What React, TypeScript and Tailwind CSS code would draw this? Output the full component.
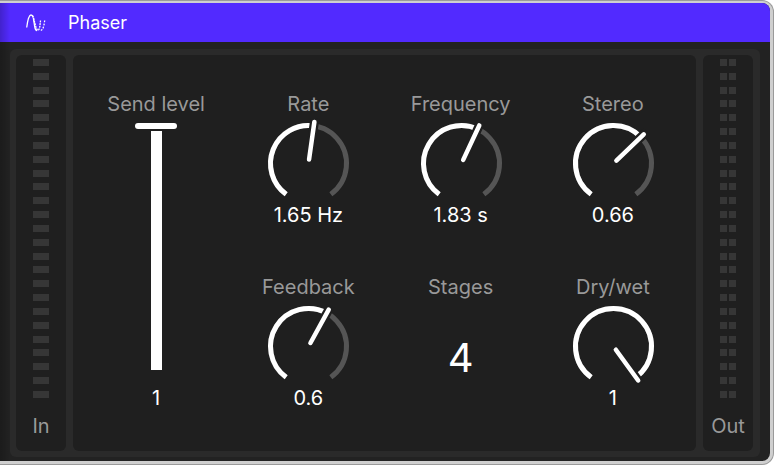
const FONT = "font-['Inter','Liberation_Sans',sans-serif]";
const SWEEP = 144;
const RADIUS = 38;

function point(angle: number, radius: number) {
  const a = (angle * Math.PI) / 180;
  return [50 + radius * Math.sin(a), 50 - radius * Math.cos(a)];
}

function arc(from: number, to: number) {
  const [x1, y1] = point(from, RADIUS);
  const [x2, y2] = point(to, RADIUS);
  return `M${x1} ${y1}A${RADIUS} ${RADIUS} 0 ${to - from > 180 ? 1 : 0} 1 ${x2} ${y2}`;
}

function Dial({ position }: { position: number }) {
  const angle = (position * 2 - 1) * SWEEP;
  const [x1, y1] = point(angle, 4);
  const [x2, y2] = point(angle, 42);
  const [hx, hy] = point(angle, 46);
  return (
    <svg viewBox="3.5 4.5 92 92" className="size-[92px]" fill="none" aria-hidden="true">
      <path d={arc(-SWEEP, SWEEP)} stroke="#555555" strokeWidth="5" />
      <path d={arc(-SWEEP, angle)} stroke="#ffffff" strokeWidth="5" />
      <path d={`M${x1} ${y1}L${hx} ${hy}`} stroke="#1f1f1f" strokeWidth="9" />
      <path d={`M${x1} ${y1}L${x2} ${y2}`} stroke="#ffffff" strokeWidth="4.5" strokeLinecap="round" />
    </svg>
  );
}

type KnobProps = { id: string; label: string; value: string; position: number };

function Knob({ id, label, value, position }: KnobProps) {
  return (
    <div className="flex flex-col items-center">
      <label htmlFor={id} className="text-xl leading-6 text-[#999999]">{label}</label>
      <div className="relative mt-0.5 -mb-[7px]">
        <Dial position={position} />
        <input
          id={id}
          type="range"
          min={0}
          max={1}
          step={0.001}
          defaultValue={position}
          aria-valuetext={value}
          className="absolute inset-0 size-full cursor-pointer opacity-0"
        />
      </div>
      <output htmlFor={id} className="text-xl leading-6 text-white">{value}</output>
    </div>
  );
}

function Meter({ label, channels }: { label: string; channels: number }) {
  return (
    <section aria-label={label} className="flex w-[50px] shrink-0 flex-col items-center rounded-md bg-[#1f1f1f] pt-1">
      <div className="flex h-[339px] gap-0.5">
        {Array.from({ length: channels }, (_, c) => (
          <div key={c} className="flex flex-col justify-between">
            {Array.from({ length: 25 }, (_, i) => (
              <div key={i} className={`h-[7px] bg-[#363636] ${channels === 1 ? "w-4" : "w-[7px]"}`} />
            ))}
          </div>
        ))}
      </div>
      <span className="mt-4 text-xl leading-6 text-[#999999]">{label}</span>
    </section>
  );
}

export default function App() {
  return (
    <main className={`rounded-r-xl border-y border-r border-[#9a9a9a] bg-[#cfcfcf] pt-0.5 pr-[3px] pb-[3px] ${FONT}`}>
      <div className="relative overflow-hidden rounded-r-lg bg-[#222222] pb-1">
        <header className="flex h-[39px] items-center gap-[22px] bg-[#522aff] pl-[26px] text-white">
          <svg viewBox="0 0 20 18" className="h-[18px] w-5" fill="none" stroke="currentColor" strokeWidth="1.3" aria-hidden="true">
            <path d="M.7 13.500C1.500 7.500 2.500 1 5 1c1.200 0 1.800 1 2.200 2.500" />
            <path d="M7.300 4c.6 3 .9 6 1.500 9 .4 2.200 1 3.500 2.200 3.500" />
            <path d="M6.500 1.500c2 3 2.500 12 5 14.500 2 1 2.500-4 3-9.500" strokeDasharray="2 .7" />
            <path d="M18.700 6.500c-.6 4-1.300 9.500-4 10" strokeDasharray="1.800 1.300" />
          </svg>
          <h1 className="text-lg leading-6">Phaser</h1>
        </header>
        <div className="mt-[7px] mr-2.5 ml-2.5 flex gap-[7px] rounded-md bg-[#2a2a2a] py-1.5 pr-[7px] pl-1.5">
          <Meter label="In" channels={1} />
          <div className="grid max-h-[396px] grow auto-rows-[183px] grid-cols-4 rounded-md bg-[#1f1f1f] px-[7px] pt-[37px]">
            <div className="row-span-2 flex flex-col items-center">
              <label htmlFor="send" className="text-xl leading-6 text-[#999999]">Send level</label>
              <div className="relative mt-[7px] flex flex-col items-center gap-0.5">
                <div className="h-1.5 w-[42px] rounded-full bg-white" />
                <div className="h-[239px] w-[11px] bg-white" />
                <input id="send" type="range" min={0} max={1} step={0.01} defaultValue={1} className="absolute inset-0 size-full cursor-pointer opacity-0 [direction:rtl] [writing-mode:vertical-lr]" />
              </div>
              <output htmlFor="send" className="mt-4 text-xl leading-6 text-white">1</output>
            </div>
            <Knob id="rate" label="Rate" value="1.65 Hz" position={0.528} />
            <Knob id="frequency" label="Frequency" value="1.83 s" position={0.587} />
            <Knob id="stereo" label="Stereo" value="0.66" position={0.66} />
            <Knob id="feedback" label="Feedback" value="0.6" position={0.6} />
            <div className="flex flex-col items-center">
              <label htmlFor="stages" className="text-xl leading-6 text-[#999999]">Stages</label>
              <input id="stages" type="text" inputMode="numeric" defaultValue="4" className="mt-[35px] h-12 w-20 bg-transparent text-center text-[40px] text-white outline-none" />
            </div>
            <Knob id="drywet" label="Dry/wet" value="1" position={1} />
          </div>
          <Meter label="Out" channels={2} />
        </div>
        <div className="pointer-events-none absolute inset-y-0 left-0 w-2.5 bg-linear-to-r from-black/20 to-transparent" />
      </div>
    </main>
  );
}
